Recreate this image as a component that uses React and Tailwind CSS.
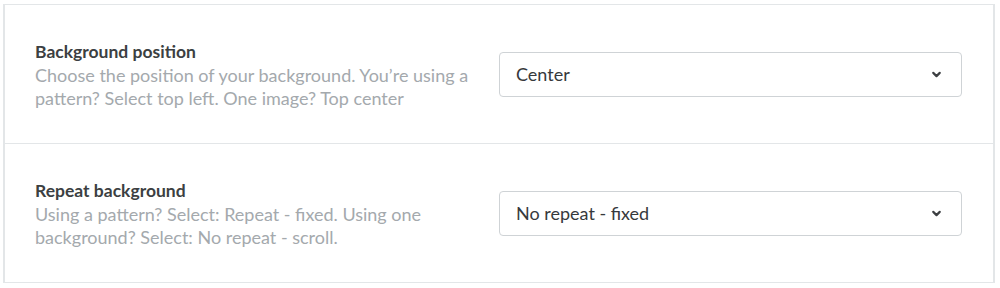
import { ChevronDown } from "lucide-react";

const rows = [
    {
        title: "Background position",
        description:
            "Choose the position of your background. You’re using a pattern? Select top left. One image? Top center",
        value: "Center",
    },
    {
        title: "Repeat background",
        description:
            "Using a pattern? Select: Repeat - fixed. Using one background? Select: No repeat - scroll.",
        value: "No repeat - fixed",
    },
];

const SettingRow = ({ title, description, value }) => (
    <div className="flex items-center h-[139px] pl-[30px] pr-[31px] border-b border-[#e3e6e8]">
        <div className="w-[440px] shrink-0">
            <div className="text-[17.5px] font-bold text-[#3c3f42] leading-[25px]">
                {title}
            </div>
            <div className="text-[18px] text-[#a4a9ad] leading-[23px]">
                {description}
            </div>
        </div>
        <div className="ml-auto w-[463px] h-[45px] flex items-center justify-between pl-[16px] pr-[18px] border border-[#cfd3d6] rounded-[4px] bg-white">
            <span className="text-[18px] text-[#36393c]">{value}</span>
            <ChevronDown size={13} strokeWidth={4} className="text-[#3c3f42]" />
        </div>
    </div>
);

export default function App() {
    return (
        <div
            className="w-[1000px] h-[288px] bg-white"
            style={{ fontFamily: "Lato, 'Open Sans', sans-serif" }}
        >
            <div className="ml-[3px] w-[992px] mt-[4px] border-t border-l-2 border-r-2 border-[#e3e6e8]">
                {rows.map((row) => (
                    <SettingRow key={row.title} {...row} />
                ))}
            </div>
        </div>
    );
}
